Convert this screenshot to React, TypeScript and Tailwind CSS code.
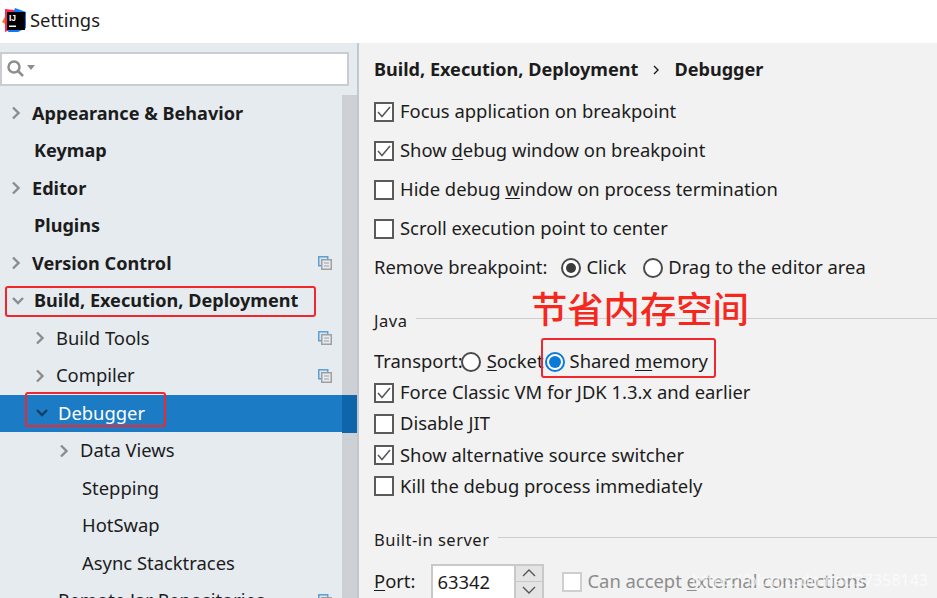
import React from 'react';

const font = "font-['Noto_Sans','Open_Sans',sans-serif]";

function Chevron({ open = false, className = 'text-[#8c8c8c]' }: { open?: boolean; className?: string }) {
  return (
    <svg width="12" height="14" viewBox="0 0 12 14" fill="none" stroke="currentColor" strokeWidth="2.4" className={className}>
      {open ? <path d="M1 4l5 5 5-5" /> : <path d="M3 1.5l5.5 5.5L3 12.5" />}
    </svg>
  );
}

function ProjectIcon() {
  return (
    <svg width="14" height="14" viewBox="0 0 14 14" fill="none">
      <rect x="0.75" y="0.75" width="9" height="9" fill="#d5e6f2" stroke="#5f9fd2" strokeWidth="1.5" />
      <rect x="3.75" y="3.75" width="9.5" height="9.5" fill="#e6ebf0" stroke="#a0a0a0" strokeWidth="1.5" />
      <path d="M6 7h5M6 10h5" stroke="#a0a0a0" />
    </svg>
  );
}

interface TreeRowProps {
  label: string;
  indent: number;
  arrow?: 'open' | 'closed';
  bold?: boolean;
  project?: boolean;
  selected?: boolean;
}

function TreeRow({ label, indent, arrow, bold, project, selected }: TreeRowProps) {
  return (
    <div className={`relative flex h-[37.5px] items-center ${selected ? 'bg-[#1b7bc4] text-white' : 'text-[#1c1c1c]'}`}>
      <div className="flex flex-1 items-center" style={{ paddingLeft: indent }}>
        {arrow && (
          <span className="w-[22px] shrink-0">
            <Chevron open={arrow === 'open'} className={selected ? 'text-[#123f66]' : 'text-[#8c8c8c]'} />
          </span>
        )}
        <span className={`-mt-[1px] leading-none whitespace-nowrap ${bold ? 'text-[18.1px] font-bold' : 'text-[18.4px]'}`}>{label}</span>
      </div>
      {project && (
        <span className="mr-[10px] flex">
          <ProjectIcon />
        </span>
      )}
    </div>
  );
}

function Checkbox({ checked = false, disabled = false }: { checked?: boolean; disabled?: boolean }) {
  return (
    <span className={`flex h-[20px] w-[20px] shrink-0 items-center justify-center border-2 ${disabled ? 'border-[#cfcfcf] bg-white' : 'border-[#5a5a5a] bg-white'}`}>
      {checked && (
        <svg width="14" height="12" viewBox="0 0 14 12" fill="none" stroke="#5a5a5a" strokeWidth="1.6">
          <path d="M1 6l4 4.5L13 1" />
        </svg>
      )}
    </span>
  );
}

function Radio({ state = 'off' }: { state?: 'off' | 'dark' | 'blue' }) {
  if (state === 'blue') {
    return (
      <span className="flex h-[20px] w-[20px] shrink-0 items-center justify-center rounded-full border-2 border-[#0a7ad9] bg-white">
        <span className="h-[12px] w-[12px] rounded-full bg-[#0a7ad9]" />
      </span>
    );
  }
  return (
    <span className="flex h-[20px] w-[20px] shrink-0 items-center justify-center rounded-full border-2 border-[#4a4a4a] bg-white">
      {state === 'dark' && <span className="h-[10px] w-[10px] rounded-full bg-[#3c3c3c]" />}
    </span>
  );
}

function CheckRow({ checked, height, children }: { checked?: boolean; height: string; children: React.ReactNode }) {
  return (
    <div className={`flex items-center gap-[6px] ${height}`}>
      <Checkbox checked={checked} />
      <span className="-mt-[1px] whitespace-nowrap">{children}</span>
    </div>
  );
}

function SectionTitle({ title, height }: { title: string; height: string }) {
  return (
    <div className={`flex items-center gap-[9px] text-[16.5px] tracking-[0.5px] ${height}`}>
      <span className="whitespace-nowrap">{title}</span>
      <span className="h-px flex-1 -translate-y-[3px] bg-[#cdcdcd]" />
    </div>
  );
}

export default function App() {
  return (
    <div className={`relative flex h-[598px] w-[937px] flex-col overflow-hidden bg-white text-[#1c1c1c] ${font}`}>
      <header className="flex h-[43px] shrink-0 items-center gap-[3px] pl-[2px]">
        <svg width="25" height="25" viewBox="0 0 25 25" className="-mt-[2px]">
          <path d="M0 14L5 5l6 2-3 12z" fill="#f97a12" />
          <path d="M3 1l10 1-5 20-5 2z" fill="#fe2857" />
          <path d="M13 0l11 4v16l-8 4H6z" fill="#087cfa" />
          <rect x="5" y="4" width="18" height="18" fill="#000" />
          <text x="7" y="13" fontSize="8.5" fontWeight="700" fill="#fff" fontFamily="Liberation Sans, sans-serif">IJ</text>
          <rect x="7" y="17.5" width="7" height="1.5" fill="#fff" />
        </svg>
        <span className="-mt-[4px] text-[18.4px]">Settings</span>
      </header>

      <div className="flex min-h-0 flex-1">
        <aside className="flex w-[359px] shrink-0 flex-col border-r-2 border-[#c4c8cc] bg-[#e6ebf0]">
          <div className="flex h-[51.5px] shrink-0 items-center">
            <div className="flex h-[34px] w-[349px] items-center gap-[1px] border-2 border-[#c9cdd1] bg-white pl-[4px]">
              <svg width="20" height="20" viewBox="0 0 20 20" fill="none" stroke="#8e8e8e" strokeWidth="2.5">
                <circle cx="8" cy="8" r="5.5" />
                <path d="M12 12l5 5" />
              </svg>
              <svg width="8" height="5" viewBox="0 0 8 5" className="-mt-[3px]">
                <path d="M0 0h8L4 5z" fill="#8e8e8e" />
              </svg>
            </div>
          </div>
          <div className="flex min-h-0 flex-1">
            <div className="min-w-0 flex-1">
              <TreeRow label="Appearance & Behavior" indent={10} arrow="closed" bold />
              <TreeRow label="Keymap" indent={34} bold />
              <TreeRow label="Editor" indent={10} arrow="closed" bold />
              <TreeRow label="Plugins" indent={34} bold />
              <TreeRow label="Version Control" indent={10} arrow="closed" bold project />
              <TreeRow label="Build, Execution, Deployment" indent={12} arrow="open" bold />
              <TreeRow label="Build Tools" indent={34} arrow="closed" project />
              <TreeRow label="Compiler" indent={34} arrow="closed" project />
              <TreeRow label="Debugger" indent={36} arrow="open" selected />
              <TreeRow label="Data Views" indent={58} arrow="closed" />
              <TreeRow label="Stepping" indent={82} />
              <TreeRow label="HotSwap" indent={82} />
              <TreeRow label="Async Stacktraces" indent={82} />
              <TreeRow label="Remote Jar Repositories" indent={58} project />
            </div>
            <div className="flex w-[15px] shrink-0 flex-col bg-[#cdd1d5]">
              <div className="mt-[300.5px] h-[37.5px] bg-[#0f65ab]" />
            </div>
          </div>
        </aside>

        <main className="min-w-0 flex-1 bg-[#f2f2f2] pl-[15px] text-[18.4px]">
          <div className="flex h-[49px] items-center gap-[14px] pt-[4px] text-[18.1px] font-bold">
            <span className="whitespace-nowrap">Build, Execution, Deployment</span>
            <svg width="8" height="12" viewBox="0 0 8 12" fill="none" stroke="#1c1c1c" strokeWidth="1.4">
              <path d="M2 2l4 4-4 4" />
            </svg>
            <span>Debugger</span>
          </div>
          <CheckRow checked height="h-[39px]">Focus application on breakpoint</CheckRow>
          <CheckRow checked height="h-[39px]">Show <u className="underline-offset-2">d</u>ebug window on breakpoint</CheckRow>
          <CheckRow height="h-[39px]">Hide debug <u className="underline-offset-2">w</u>indow on process termination</CheckRow>
          <CheckRow height="h-[39px]">Scroll execution point to center</CheckRow>
          <div className="flex h-[39px] items-center">
            <span className="-mt-[1px] mr-[14px] whitespace-nowrap">Remove breakpoint:</span>
            <Radio state="dark" />
            <span className="-mt-[1px] ml-[5px] mr-[17px]">Click</span>
            <Radio />
            <span className="-mt-[1px] ml-[5px] whitespace-nowrap">Drag to the editor area</span>
          </div>
          <SectionTitle title="Java" height="h-[59px] pt-[10px]" />
          <div className="flex h-[31px] items-center">
            <span className="-mt-[1px] -mr-[2px]">Transport:</span>
            <Radio />
            <span className="-mt-[1px] ml-[6px] mr-[1px]"><u className="underline-offset-2">S</u>ocket</span>
            <Radio state="blue" />
            <span className="-mt-[1px] ml-[5px] whitespace-nowrap">Shared <u className="underline-offset-2">m</u>emory</span>
          </div>
          <CheckRow checked height="h-[31px]">Force Classic VM for JDK 1.3.x and earlier</CheckRow>
          <CheckRow height="h-[31.5px]">Disable JIT</CheckRow>
          <CheckRow checked height="h-[31px]">Show alternative source switcher</CheckRow>
          <CheckRow height="h-[31.5px]">Kill the debug process immediately</CheckRow>
          <SectionTitle title="Built-in server" height="h-[57.5px] pt-[19.5px]" />
          <div className="flex h-[44px] items-center">
            <span className="-mt-[1px] mr-[16px]"><u className="underline-offset-2">P</u>ort:</span>
            <div className="flex h-[36px] w-[113px] items-stretch border-2 border-[#c9c9c9] bg-white">
              <span className="flex flex-1 items-center pl-[4px]">63342</span>
              <div className="flex w-[28px] flex-col border-l-2 border-[#c9c9c9] bg-[#e4e4e4]">
                <span className="flex flex-1 items-center justify-center border-b border-[#c9c9c9]">
                  <svg width="14" height="8" viewBox="0 0 14 8" fill="none" stroke="#555" strokeWidth="1.4">
                    <path d="M1 7l6-6 6 6" />
                  </svg>
                </span>
                <span className="flex flex-1 items-center justify-center">
                  <svg width="14" height="8" viewBox="0 0 14 8" fill="none" stroke="#555" strokeWidth="1.4">
                    <path d="M1 1l6 6 6-6" />
                  </svg>
                </span>
              </div>
            </div>
            <span className="ml-[18px]"><Checkbox disabled /></span>
            <span className="-mt-[1px] ml-[5px] whitespace-nowrap text-[#8c8c8c]">Can accept <u className="underline-offset-2">e</u>xternal connections</span>
          </div>
        </main>
      </div>

      {/* annotations drawn over the screenshot */}
      <div className="absolute left-[5px] top-[286px] h-[31px] w-[311px] rounded-[3px] border-2 border-[#f0282d]" />
      <div className="absolute left-[25px] top-[392px] h-[35px] w-[141px] rounded-[3px] border-2 border-[#f0282d]" />
      <div className="absolute left-[541px] top-[338px] h-[40px] w-[175px] rounded-[3px] border-2 border-[#f0282d]" />
      <span className="absolute left-[531px] top-[281px] whitespace-nowrap font-['Noto_Sans_CJK_SC',sans-serif] text-[36.3px] font-medium leading-[52px] text-[#f5281e]">节省内存空间</span>
      <span className="absolute right-[9px] top-[568px] whitespace-nowrap text-[16px] text-white/70">https://blog.csdn.net/37358143</span>
    </div>
  );
}
